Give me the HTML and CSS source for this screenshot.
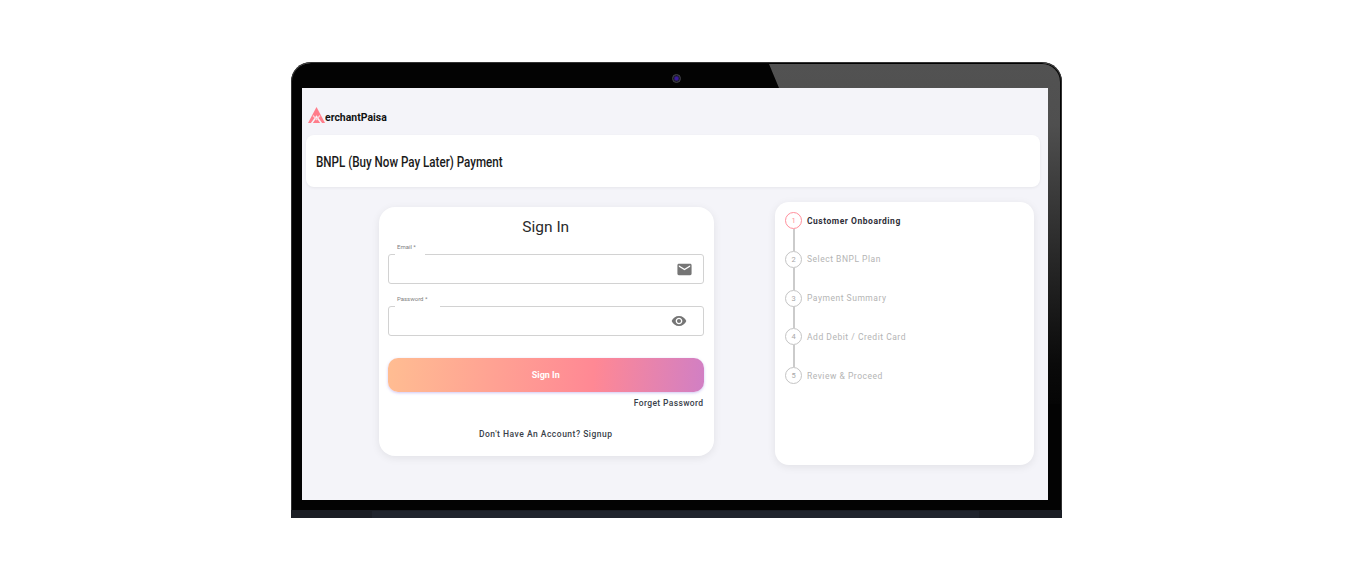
FILE: index.html
```html
<!DOCTYPE html>
<html lang="en">
<head>
  <meta charset="UTF-8">
  <title>BNPL Payment</title>
  <link rel="stylesheet" href="styles.css">
</head>
<body>
  <div class="laptop">
    <div class="glare"></div>
    <div class="camera"></div>

    <div class="screen">
      <div class="logo">
        <svg class="logo-mark" width="17" height="17" viewBox="0 0 17 17">
          <polygon points="8.5,0 17,16 0,16" fill="#ff7d8b"/>
          <polyline points="3.500,16.500 8.500,9.500 13.500,16.500" fill="none" stroke="#f4f4f9" stroke-width="1.500"/>
          <polyline points="5,8.500 8.500,12.500 12,8.500" fill="none" stroke="#ffd0d6" stroke-width="1.200"/>
        </svg>
        <span class="logo-text">erchantPaisa</span>
      </div>

      <div class="title-card"><span class="title-text">BNPL (Buy Now Pay Later) Payment</span></div>

      <div class="columns">
        <!-- Sign in -->
        <form class="signin-card">
          <h2>Sign In</h2>

          <div class="field field-email">
            <label>Email *</label>
            <svg class="field-icon" width="17" height="17" viewBox="0 0 24 24">
              <path d="M20 4H4c-1.100 0-2 .9-2 2v12c0 1.100.9 2 2 2h16c1.100 0 2-.9 2-2V6c0-1.100-.9-2-2-2zm0 4l-8 5-8-5V6l8 5 8-5v2z" fill="#757575"/>
            </svg>
          </div>

          <div class="field field-password">
            <label>Password *</label>
            <svg class="field-icon" width="16" height="16" viewBox="0 0 24 24">
              <path d="M12 4.500C7 4.500 2.730 7.610 1 12c1.730 4.390 6 7.500 11 7.500s9.270-3.110 11-7.500c-1.730-4.390-6-7.500-11-7.500zM12 17c-2.760 0-5-2.240-5-5s2.240-5 5-5 5 2.240 5 5-2.240 5-5 5zm0-8c-1.660 0-3 1.340-3 3s1.340 3 3 3 3-1.340 3-3-1.340-3-3-3z" fill="#757575"/>
            </svg>
          </div>

          <button type="button" class="signin-btn">Sign In</button>
          <div class="forget">Forget Password</div>
          <div class="signup">Don't Have An Account? Signup</div>
        </form>

        <!-- Steps -->
        <div class="steps-card">
          <div class="step active"><span class="dot">1</span><span class="step-name">Customer Onboarding</span></div>
          <div class="step"><span class="dot">2</span><span class="step-name">Select BNPL Plan</span></div>
          <div class="step"><span class="dot">3</span><span class="step-name">Payment Summary</span></div>
          <div class="step"><span class="dot">4</span><span class="step-name">Add Debit / Credit Card</span></div>
          <div class="step"><span class="dot">5</span><span class="step-name">Review &amp; Proceed</span></div>
        </div>
      </div>
    </div>

    <div class="base"><div class="notch"></div></div>
  </div>
</body>
</html>
```

FILE: styles.css
```css
html, body {
  margin: 0;
  padding: 0;
  height: 100%;
  background: #fff;
}
body {
  font-family: Roboto, Arial, sans-serif;
  overflow: hidden;
}
.laptop {
  position: relative;
  box-sizing: border-box;
  width: 771px;
  height: 456px;
  margin: 62px 0 0 291px;
  padding: 26px 14px 0 11px;
  background: #030303;
  border-radius: 20px 20px 0 0;
  box-shadow: inset 0 0 0 1px #333, inset 0 1px 0 #8a8a8a;
  overflow: hidden;
}
.glare {
  position: absolute;
  top: 2px;
  right: 2px;
  width: 291px;
  height: 340px;
  background: linear-gradient(180deg, #525252 0, #4f4f4f 60px, #262626 200px, #0a0a0a 300px, #050505 340px);
  clip-path: polygon(0 0, 100% 0, 100% 100%, 279px 100%, 279px 24px, 10px 24px);
  border-radius: 0 18px 0 0;
}
.camera {
  position: absolute;
  top: 12px;
  left: 381px;
  box-sizing: border-box;
  width: 9px;
  height: 9px;
  border-radius: 50%;
  background: radial-gradient(circle, #3a1aa0 0, #3a1aa0 25%, #1a1a26 60%);
  border: 1px solid #45454d;
}
.screen {
  position: relative;
  height: 412px;
  box-sizing: border-box;
  padding: 18px 8px 0 4px;
  background: #f4f4f9;
}
.logo {
  display: flex;
  align-items: flex-end;
  padding-left: 2px;
  height: 18px;
  margin-bottom: 11px;
}
.logo-mark {
  display: block;
}
.logo-text {
  display: inline-block;
  font-size: 11.500px;
  font-weight: 700;
  line-height: 14px;
  color: #111;
  transform: scaleX(0.91);
  transform-origin: left;
}
.title-card {
  height: 52px;
  line-height: 53px;
  padding-left: 10px;
  background: #fff;
  border-radius: 8px;
  box-shadow: 0 1px 3px rgba(0, 0, 0, 0.06);
}
.title-text {
  display: inline-block;
  font-size: 14px;
  font-weight: 500;
  color: #1a1a1a;
  transform: scaleX(0.83);
  transform-origin: left;
  white-space: nowrap;
}
.columns {
  display: flex;
  align-items: flex-start;
  padding-top: 15px;
}
.signin-card {
  box-sizing: border-box;
  width: 335px;
  height: 249px;
  margin: 5px 0 0 73px;
  padding: 11px 10.500px 0 9px;
  background: #fff;
  border-radius: 16px;
  box-shadow: 0 2px 8px rgba(0, 0, 0, 0.08);
}
.signin-card h2 {
  margin: 0 0 17px;
  font-size: 15.500px;
  font-weight: 400;
  line-height: 19px;
  text-align: center;
  color: #2b2b2b;
}
.field {
  position: relative;
  display: flex;
  align-items: center;
  justify-content: flex-end;
  box-sizing: border-box;
  height: 30px;
  margin-bottom: 22px;
  border: 1px solid #d2d2d2;
  border-radius: 3px;
}
.field label {
  position: absolute;
  top: -14px;
  left: 6px;
  height: 15px;
  padding: 0 0 0 2px;
  line-height: 11px;
  font-size: 6px;
  color: #808080;
  background: #fff;
}
.field-email label { width: 28px; }
.field-password label { width: 43px; }
.field-email .field-icon { margin-right: 10px; }
.field-password .field-icon { margin-right: 16px; }
.signin-btn {
  display: block;
  width: 100%;
  height: 34px;
  border: none;
  border-radius: 10px;
  background: linear-gradient(95deg, #ffbd92 0%, #ff8894 65%, #d17fc4 100%);
  box-shadow: 0 1px 3px rgba(120, 90, 220, 0.35);
  font-family: Roboto, Arial, sans-serif;
  font-size: 9px;
  font-weight: 700;
  color: #fff;
}
.forget {
  margin-top: 6px;
  font-size: 8.5px;
  font-weight: 500;
  letter-spacing: 0.37px;
  line-height: 11px;
  text-align: right;
  color: #3a3f4a;
}
.signup {
  margin-top: 20px;
  font-size: 8.5px;
  font-weight: 500;
  letter-spacing: 0.5px;
  line-height: 11px;
  text-align: center;
  color: #3a3f4a;
}
.steps-card {
  box-sizing: border-box;
  width: 259px;
  height: 263px;
  margin-left: 61px;
  padding: 10px 0 0 10px;
  background: #fff;
  border-radius: 14px;
  box-shadow: 0 2px 8px rgba(0, 0, 0, 0.08);
}
.step {
  position: relative;
  display: flex;
  align-items: center;
  height: 17px;
  margin-bottom: 21.750px;
}
.step + .step::before {
  content: "";
  position: absolute;
  left: 8px;
  top: -22px;
  width: 1.500px;
  height: 22px;
  background: #cbcbcb;
}
.dot {
  box-sizing: border-box;
  display: flex;
  align-items: center;
  justify-content: center;
  flex: none;
  width: 17px;
  height: 17px;
  margin-right: 5px;
  border: 1.500px solid #c4c4c4;
  border-radius: 50%;
  font-size: 7.500px;
  color: #a8a8a8;
}
.step-name {
  font-size: 8.5px;
  font-weight: 400;
  letter-spacing: 0.52px;
  color: #b4b4b4;
}
.step.active .dot {
  border-color: #ff8f9c;
  color: #ff8f9c;
}
.step.active .step-name {
  color: #2e2e38;
  font-weight: 700;
}
.base {
  position: absolute;
  left: 0;
  right: 0;
  bottom: 0;
  height: 8px;
  background: #1b1e25;
}
.notch {
  height: 7px;
  margin: 1px 83px 0 81px;
  background: #20242d;
}
```
